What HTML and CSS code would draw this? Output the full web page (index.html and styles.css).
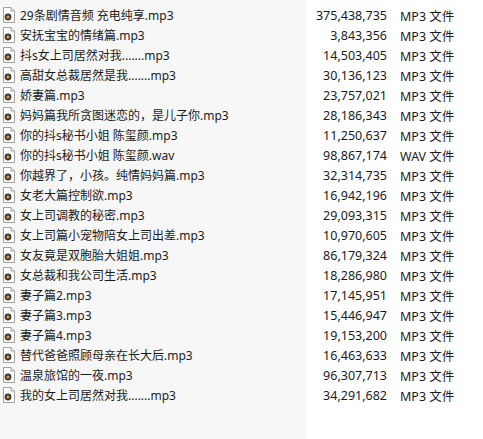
FILE: index.html
```html
<!DOCTYPE html>
<html lang="zh">
<head>
<meta charset="utf-8">
<link rel="stylesheet" href="styles.css">
</head>
<body>
<svg width="0" height="0" class="defs">
  <defs>
    <symbol id="audio" viewBox="0 0 12 16">
      <path d="M0.5 0.5 H8 L11.5 4 V15.5 H0.5 Z" fill="#fff" stroke="#a0a0a0"/>
      <path d="M8 0.5 V4 H11.5" fill="#eee" stroke="#a0a0a0"/>
      <circle cx="5" cy="10" r="3.4" fill="#3a3a3a"/>
      <circle cx="5" cy="10" r="1.5" fill="#e8923a"/>
    </symbol>
  </defs>
</svg>
<div class="list">
  <div class="row"><div class="name"><svg class="ico"><use href="#audio"/></svg><span>29条剧情音频 充电纯享.mp3</span></div><div class="size">375,438,735</div><div class="type">MP3 文件</div></div>
  <div class="row"><div class="name"><svg class="ico"><use href="#audio"/></svg><span>安抚宝宝的情绪篇.mp3</span></div><div class="size">3,843,356</div><div class="type">MP3 文件</div></div>
  <div class="row"><div class="name"><svg class="ico"><use href="#audio"/></svg><span>抖s女上司居然对我.......mp3</span></div><div class="size">14,503,405</div><div class="type">MP3 文件</div></div>
  <div class="row"><div class="name"><svg class="ico"><use href="#audio"/></svg><span>高甜女总裁居然是我.......mp3</span></div><div class="size">30,136,123</div><div class="type">MP3 文件</div></div>
  <div class="row"><div class="name"><svg class="ico"><use href="#audio"/></svg><span>娇妻篇.mp3</span></div><div class="size">23,757,021</div><div class="type">MP3 文件</div></div>
  <div class="row"><div class="name"><svg class="ico"><use href="#audio"/></svg><span>妈妈篇我所贪图迷恋的，是儿子你.mp3</span></div><div class="size">28,186,343</div><div class="type">MP3 文件</div></div>
  <div class="row"><div class="name"><svg class="ico"><use href="#audio"/></svg><span>你的抖s秘书小姐 陈玺颜.mp3</span></div><div class="size">11,250,637</div><div class="type">MP3 文件</div></div>
  <div class="row"><div class="name"><svg class="ico"><use href="#audio"/></svg><span>你的抖s秘书小姐 陈玺颜.wav</span></div><div class="size">98,867,174</div><div class="type">WAV 文件</div></div>
  <div class="row"><div class="name"><svg class="ico"><use href="#audio"/></svg><span>你越界了，小孩。纯情妈妈篇.mp3</span></div><div class="size">32,314,735</div><div class="type">MP3 文件</div></div>
  <div class="row"><div class="name"><svg class="ico"><use href="#audio"/></svg><span>女老大篇控制欲.mp3</span></div><div class="size">16,942,196</div><div class="type">MP3 文件</div></div>
  <div class="row"><div class="name"><svg class="ico"><use href="#audio"/></svg><span>女上司调教的秘密.mp3</span></div><div class="size">29,093,315</div><div class="type">MP3 文件</div></div>
  <div class="row"><div class="name"><svg class="ico"><use href="#audio"/></svg><span>女上司篇小宠物陪女上司出差.mp3</span></div><div class="size">10,970,605</div><div class="type">MP3 文件</div></div>
  <div class="row"><div class="name"><svg class="ico"><use href="#audio"/></svg><span>女友竟是双胞胎大姐姐.mp3</span></div><div class="size">86,179,324</div><div class="type">MP3 文件</div></div>
  <div class="row"><div class="name"><svg class="ico"><use href="#audio"/></svg><span>女总裁和我公司生活.mp3</span></div><div class="size">18,286,980</div><div class="type">MP3 文件</div></div>
  <div class="row"><div class="name"><svg class="ico"><use href="#audio"/></svg><span>妻子篇2.mp3</span></div><div class="size">17,145,951</div><div class="type">MP3 文件</div></div>
  <div class="row"><div class="name"><svg class="ico"><use href="#audio"/></svg><span>妻子篇3.mp3</span></div><div class="size">15,446,947</div><div class="type">MP3 文件</div></div>
  <div class="row"><div class="name"><svg class="ico"><use href="#audio"/></svg><span>妻子篇4.mp3</span></div><div class="size">19,153,200</div><div class="type">MP3 文件</div></div>
  <div class="row"><div class="name"><svg class="ico"><use href="#audio"/></svg><span>替代爸爸照顾母亲在长大后.mp3</span></div><div class="size">16,463,633</div><div class="type">MP3 文件</div></div>
  <div class="row"><div class="name"><svg class="ico"><use href="#audio"/></svg><span>温泉旅馆的一夜.mp3</span></div><div class="size">96,307,713</div><div class="type">MP3 文件</div></div>
  <div class="row"><div class="name"><svg class="ico"><use href="#audio"/></svg><span>我的女上司居然对我.......mp3</span></div><div class="size">34,291,682</div><div class="type">MP3 文件</div></div>
</div>
</body>
</html>
```
FILE: styles.css
```css
html, body {
  margin: 0;
  padding: 0;
  background: #fff;
}
.defs {
  position: absolute;
  width: 0;
  height: 0;
}
.list {
  min-height: 439px;
  box-sizing: border-box;
  padding-top: 5px;
  background: linear-gradient(to right, #f7f7f7 306px, #fff 306px);
  font-family: "Noto Sans", "Noto Sans CJK SC", sans-serif;
  font-size: 12px;
  color: #1b1b1b;
}
.row {
  display: grid;
  grid-template-columns: 306px 81px 1fr;
  height: 20px;
  align-items: center;
}
.name {
  display: flex;
  align-items: center;
  gap: 5px;
  padding-left: 3px;
  white-space: nowrap;
}
.ico {
  width: 12px;
  height: 16px;
  flex: none;
}
.size {
  text-align: right;
  font-size: 12.5px;
}
.type {
  padding-left: 13px;
  font-size: 12.5px;
}
```
